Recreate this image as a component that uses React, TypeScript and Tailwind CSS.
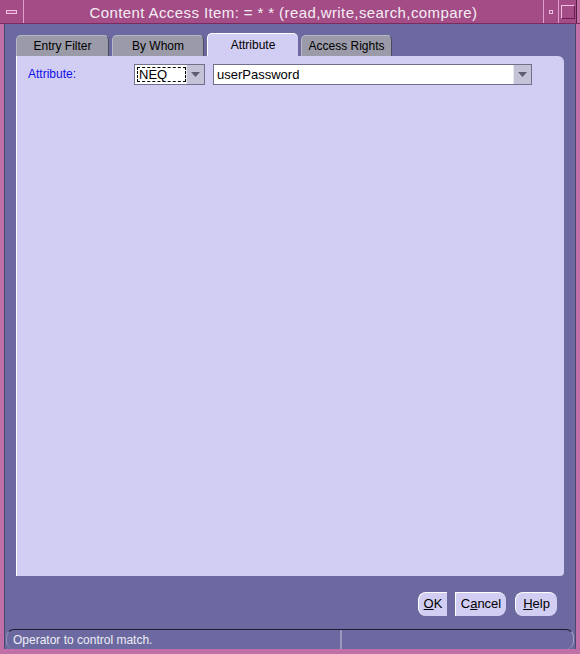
import React from "react";

const font = { fontFamily: '"Liberation Sans", Arial, sans-serif' };

function Arrow() {
  return (
    <div className="w-[18px] h-full bg-[#c4c2d6] flex items-center justify-center border-l border-[#e8e8f0]">
      <svg width="9" height="5" viewBox="0 0 9 5">
        <polygon points="0,0 9,0 4.5,5" fill="#5c5c70" />
      </svg>
    </div>
  );
}

function Tab({ label, active, w }: { label: string; active?: boolean; w: string }) {
  if (active) {
    return (
      <div
        className={`${w} h-[23px] bg-[#d2cdf2] rounded-t-[5px] border-t border-l border-white flex items-center justify-center text-[12px] text-black`}
      >
        {label}
      </div>
    );
  }
  return (
    <div
      className={`${w} h-[21px] bg-[#9a9aa8] rounded-t-[5px] border-t border-l border-[#b8b8c4] border-r border-r-[#4a4a60] flex items-center justify-center text-[12px] text-black`}
    >
      {label}
    </div>
  );
}

export default function App() {
  return (
    <div className="w-[580px] h-[654px] bg-[#c070a6] flex flex-col overflow-hidden" style={font}>
      {/* title bar */}
      <div className="h-[24px] flex bg-[#a44c86] border-b border-[#7a2c60]">
        <div className="w-[24px] h-full border-r border-[#e0a0cc] flex items-center justify-center">
          <div className="w-[11px] h-[4px] border border-[#f0c0e0] bg-[#b85c98]" />
        </div>
        <div className="flex-1 flex items-center justify-center text-[15px] tracking-[0.4px] text-[#f4eef4] pt-[3px]">
          Content Access Item: = * * (read,write,search,compare)
        </div>
        <div className="w-[15px] h-full border-l border-[#e0a0cc] flex items-center justify-center">
          <div className="w-[4px] h-[4px] border border-[#f0c0e0]" />
        </div>
        <div className="w-[19px] h-full border-l border-[#e0a0cc] border-r border-r-[#5a1c44] flex items-center justify-center">
          <div className="w-[14px] h-[14px] border border-[#f0c0e0] border-r-[#6a2050] border-b-[#6a2050]" />
        </div>
        <div className="w-[3px] h-full bg-[#c070a6]" />
      </div>

      {/* body */}
      <div className="flex-1 mx-[4px] mb-[5px] bg-[#6b699f] flex flex-col border-l border-[#4a4870] border-r border-r-[#4a4870]">
        <div className="px-[11px] pt-[9px] flex items-end gap-[3px]">
          <Tab label="Entry Filter" w="w-[93px]" />
          <Tab label="By Whom" w="w-[92px]" />
          <Tab label="Attribute" active w="w-[91px]" />
          <Tab label="Access Rights" w="w-[91px]" />
        </div>
        <div className="mx-[11px] h-[520px] bg-[#d2cdf2] rounded-tr-[6px] rounded-br-[4px] border-l border-white px-[11px] pt-[8px]">
          <div className="flex items-center h-[21px]">
            <div className="w-[106px] text-[12px] text-[#1010e8] self-start pt-[1px]">Attribute:</div>
            <div className="w-[71px] h-[21px] bg-white border border-[#70708a] flex">
              <div className="flex-1 flex items-center pl-[2px] py-[2px]">
                <div className="w-full h-full border border-dashed border-black flex items-center pl-[1px] text-[13px] text-black">
                  NEQ
                </div>
              </div>
              <Arrow />
            </div>
            <div className="w-[8px]" />
            <div className="w-[319px] h-[21px] bg-white border border-[#70708a] flex">
              <div className="flex-1 flex items-center pl-[3px] text-[13px] text-black">userPassword</div>
              <Arrow />
            </div>
          </div>
        </div>
        <div className="flex-1 flex items-center justify-end pr-[18px] pt-[2px]">
          <div className="w-[29px] h-[24px] bg-[#d2cdf2] rounded-l-[8px] border-l border-t border-white flex items-center justify-center text-[13px] text-black">
            <span><u>O</u>K</span>
          </div>
          <div className="w-[8px]" />
          <div className="w-[51px] h-[24px] bg-[#d2cdf2] rounded-r-[8px] border-l border-t border-white flex items-center justify-center text-[13px] text-black">
            <span>C<u>a</u>ncel</span>
          </div>
          <div className="w-[9px]" />
          <div className="w-[42px] h-[24px] bg-[#d2cdf2] rounded-[8px] border-l border-t border-white flex items-center justify-center text-[13px] text-black">
            <span><u>H</u>elp</span>
          </div>
        </div>
        <div className="h-[20px] mx-[1px] flex border-t border-[#1a1a30] rounded-l-[8px] rounded-r-[8px] border-l border-l-[#9090b0] border-r border-r-[#a0a0c0]">
          <div className="w-[335px] border-r-2 border-[#9898c0] flex items-center pl-[6px] text-[12px] text-[#eeeef6]">
            Operator to control match.
          </div>
          <div className="flex-1" />
        </div>
      </div>
    </div>
  );
}
